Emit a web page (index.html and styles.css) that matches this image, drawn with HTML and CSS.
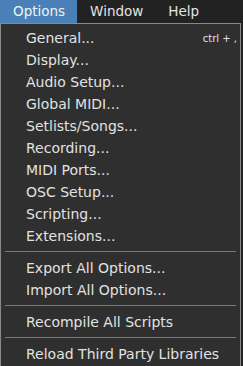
FILE: index.html
```html
<!DOCTYPE html>
<html>
<head>
<meta charset="utf-8">
<link rel="stylesheet" href="styles.css">
</head>
<body>
<div class="bar">
  <div class="top active">Options</div>
  <div class="top">Window</div>
  <div class="top">Help</div>
</div>
<div class="menu">
  <div class="item"><span>General...</span><span class="key">ctrl + ,</span></div>
  <div class="item">Display...</div>
  <div class="item">Audio Setup...</div>
  <div class="item">Global MIDI...</div>
  <div class="item">Setlists/Songs...</div>
  <div class="item">Recording...</div>
  <div class="item">MIDI Ports...</div>
  <div class="item">OSC Setup...</div>
  <div class="item">Scripting...</div>
  <div class="item">Extensions...</div>
  <div class="sep"></div>
  <div class="item">Export All Options...</div>
  <div class="item">Import All Options...</div>
  <div class="sep"></div>
  <div class="item">Recompile All Scripts</div>
  <div class="sep"></div>
  <div class="item">Reload Third Party Libraries</div>
</div>
</body>
</html>
```
FILE: styles.css
```css
html, body {
  margin: 0;
  padding: 0;
  background: #222222;
  width: 243px;
  height: 366px;
  overflow: hidden;
  font-family: "DejaVu Sans", Verdana, sans-serif;
  color: #e2e2e2;
}
.bar {
  display: flex;
  height: 23px;
  background: #222222;
}
.top {
  padding: 0 12px 0 13px;
  font-size: 13.5px;
  line-height: 23px;
}
.top.active {
  background: #4a80b8;
  color: #f2f2f2;
}
.menu {
  width: 241px;
  height: 343px;
  box-sizing: border-box;
  border: 1px solid #8a8a8a;
  border-bottom: none;
  background: #2f2f2f;
  padding: 3px 0 0 0;
}
.item {
  display: flex;
  justify-content: space-between;
  align-items: center;
  height: 22px;
  padding: 0 3px 0 25px;
  font-size: 14px;
}
.key {
  font-size: 10px;
}
.sep {
  height: 1px;
  background: #7a7a7a;
  margin: 4px 4px 5px 4px;
}
```
